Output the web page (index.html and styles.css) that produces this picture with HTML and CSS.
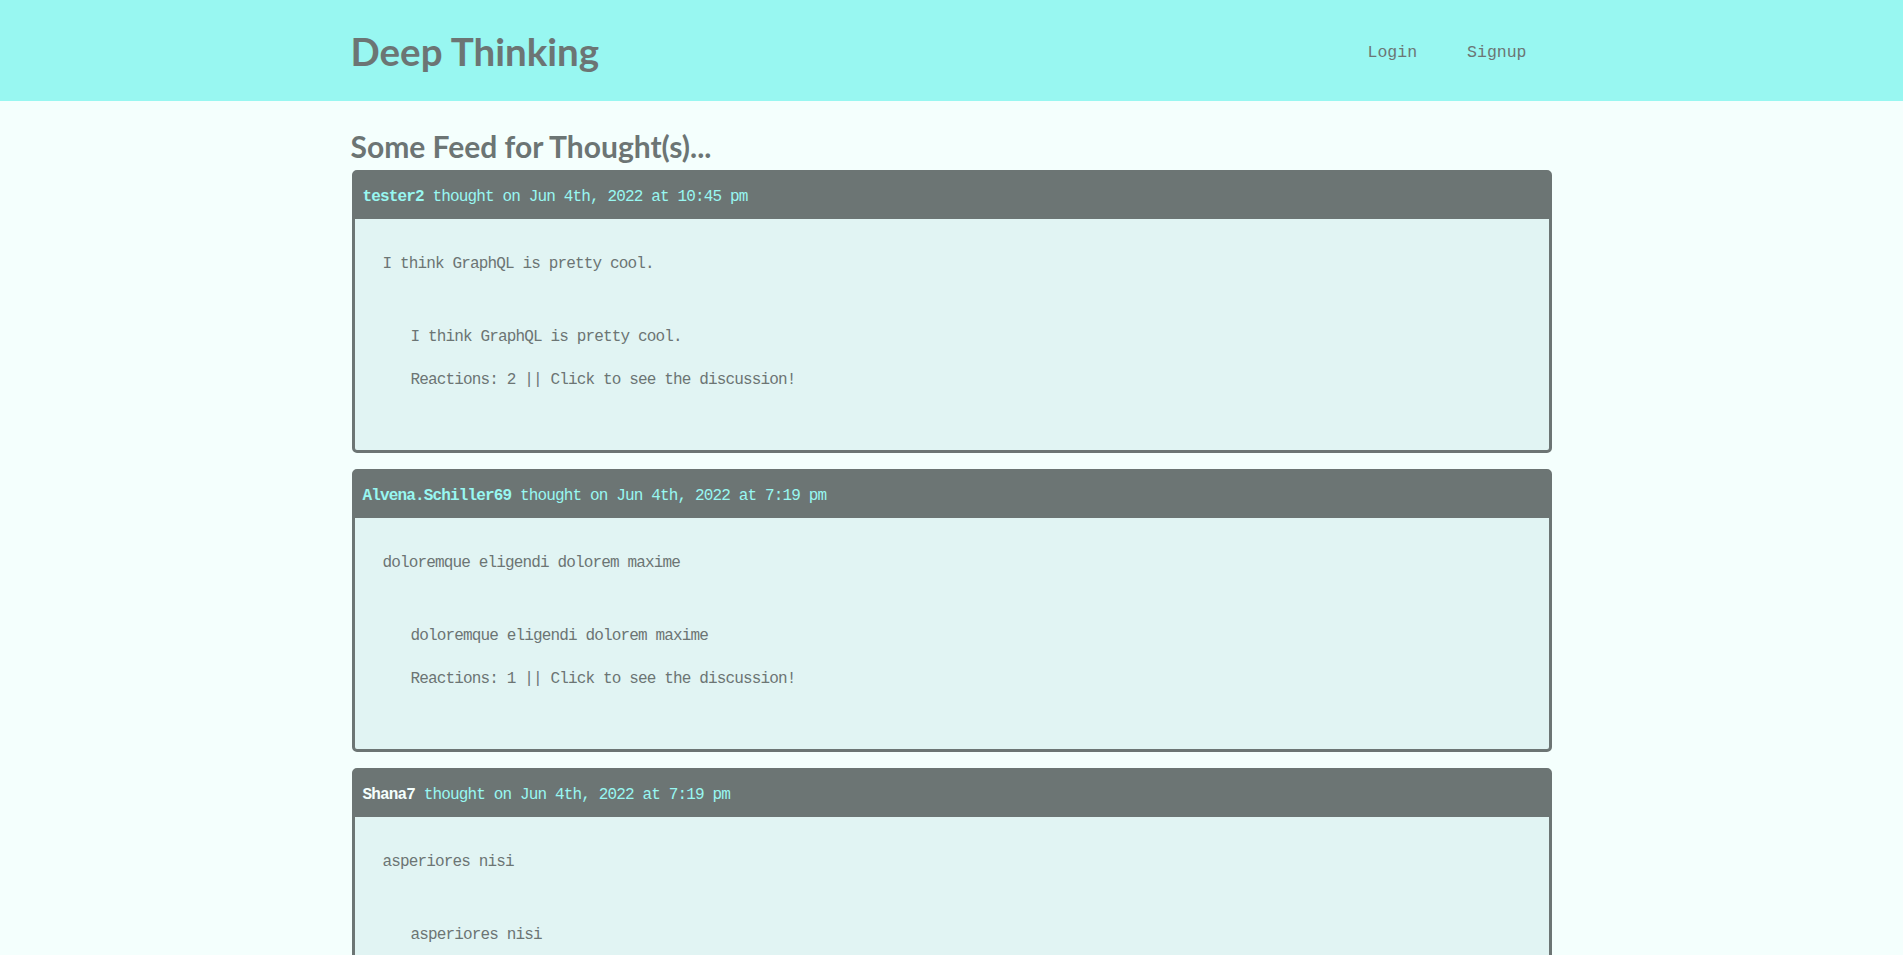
FILE: index.html
```html
<!DOCTYPE html>
<html lang="en">
<head>
<meta charset="utf-8">
<title>Deep Thinking</title>
<link rel="stylesheet" href="styles.css">
</head>
<body>
<header class="site-header">
  <div class="container header-inner">
    <a class="brand" href="#">Deep Thinking</a>
    <nav class="nav">
      <a href="#">Login</a>
      <a href="#">Signup</a>
    </nav>
  </div>
</header>
<main class="container">
  <h2 class="feed-title">Some Feed for Thought(s)...</h2>
  <div class="thought-list">
    <article class="card">
      <div class="card-header"><span class="user">tester2</span> thought on Jun 4th, 2022 at 10:45 pm</div>
      <div class="card-body">
        <p class="thought-text">I think GraphQL is pretty cool.</p>
        <div class="thought-link">
          <p>I think GraphQL is pretty cool.</p>
          <p class="reactions">Reactions: 2 || Click to see the discussion!</p>
        </div>
      </div>
    </article>
    <article class="card">
      <div class="card-header"><span class="user">Alvena.Schiller69</span> thought on Jun 4th, 2022 at 7:19 pm</div>
      <div class="card-body">
        <p class="thought-text">doloremque eligendi dolorem maxime</p>
        <div class="thought-link">
          <p>doloremque eligendi dolorem maxime</p>
          <p class="reactions">Reactions: 1 || Click to see the discussion!</p>
        </div>
      </div>
    </article>
    <article class="card">
      <div class="card-header"><span class="user user-light">Shana7</span> thought on Jun 4th, 2022 at 7:19 pm</div>
      <div class="card-body">
        <p class="thought-text">asperiores nisi</p>
        <div class="thought-link">
          <p>asperiores nisi</p>
          <p class="reactions">Reactions: 0 || Click to see the discussion!</p>
        </div>
      </div>
    </article>
  </div>
</main>
</body>
</html>
```

FILE: styles.css
```css
* { box-sizing: border-box; }

body {
  margin: 0;
  background: #f4fffd;
  color: #6c7574;
  font-family: "Liberation Mono", "DejaVu Sans Mono", monospace;
}

a { color: inherit; text-decoration: none; }

.container {
  width: 1200px;
  margin: 0 auto;
}

.site-header {
  background: #98f7f1;
  height: 101px;
}

.header-inner {
  height: 100%;
  display: flex;
  align-items: center;
  justify-content: space-between;
}

.brand {
  font-family: "Lato", "Liberation Sans", sans-serif;
  font-weight: 700;
  font-size: 38.5px;
  line-height: 46px;
  margin-left: -1px;
  color: #6c7574;
}

.nav {
  display: flex;
  gap: 50px;
  padding-top: 4px;
  padding-right: 25px;
  font-family: "Liberation Mono", monospace;
  font-size: 16.5px;
  color: #6c7574;
}

.feed-title {
  font-family: "Lato", "Liberation Sans", sans-serif;
  font-weight: 700;
  font-size: 30px;
  line-height: 36px;
  margin: 0 0 0 -1px;
  padding: 27px 0 6px;
}

.thought-list {
  display: flex;
  flex-direction: column;
  gap: 16px;
}

.card {
  border: 3px solid #6c7574;
  border-radius: 5px;
  background: #e1f4f3;
  font-size: 16px;
  letter-spacing: -0.85px;
}

.card-header {
  background: #6c7574;
  color: #98f7f1;
  height: 46px;
  display: flex;
  align-items: center;
  padding: 2px 8px 0;
  white-space: pre;
}

.user { font-weight: 700; }
.user-light { color: #f4fffd; }

.card-body {
  padding: 35px 28px 60px;
  line-height: 20px;
}

.card-body p { margin: 0; }

.card-body .thought-text { margin-bottom: 53px; }

.thought-link { padding-left: 28px; }

.card-body .reactions { margin-top: 23px; }
```
